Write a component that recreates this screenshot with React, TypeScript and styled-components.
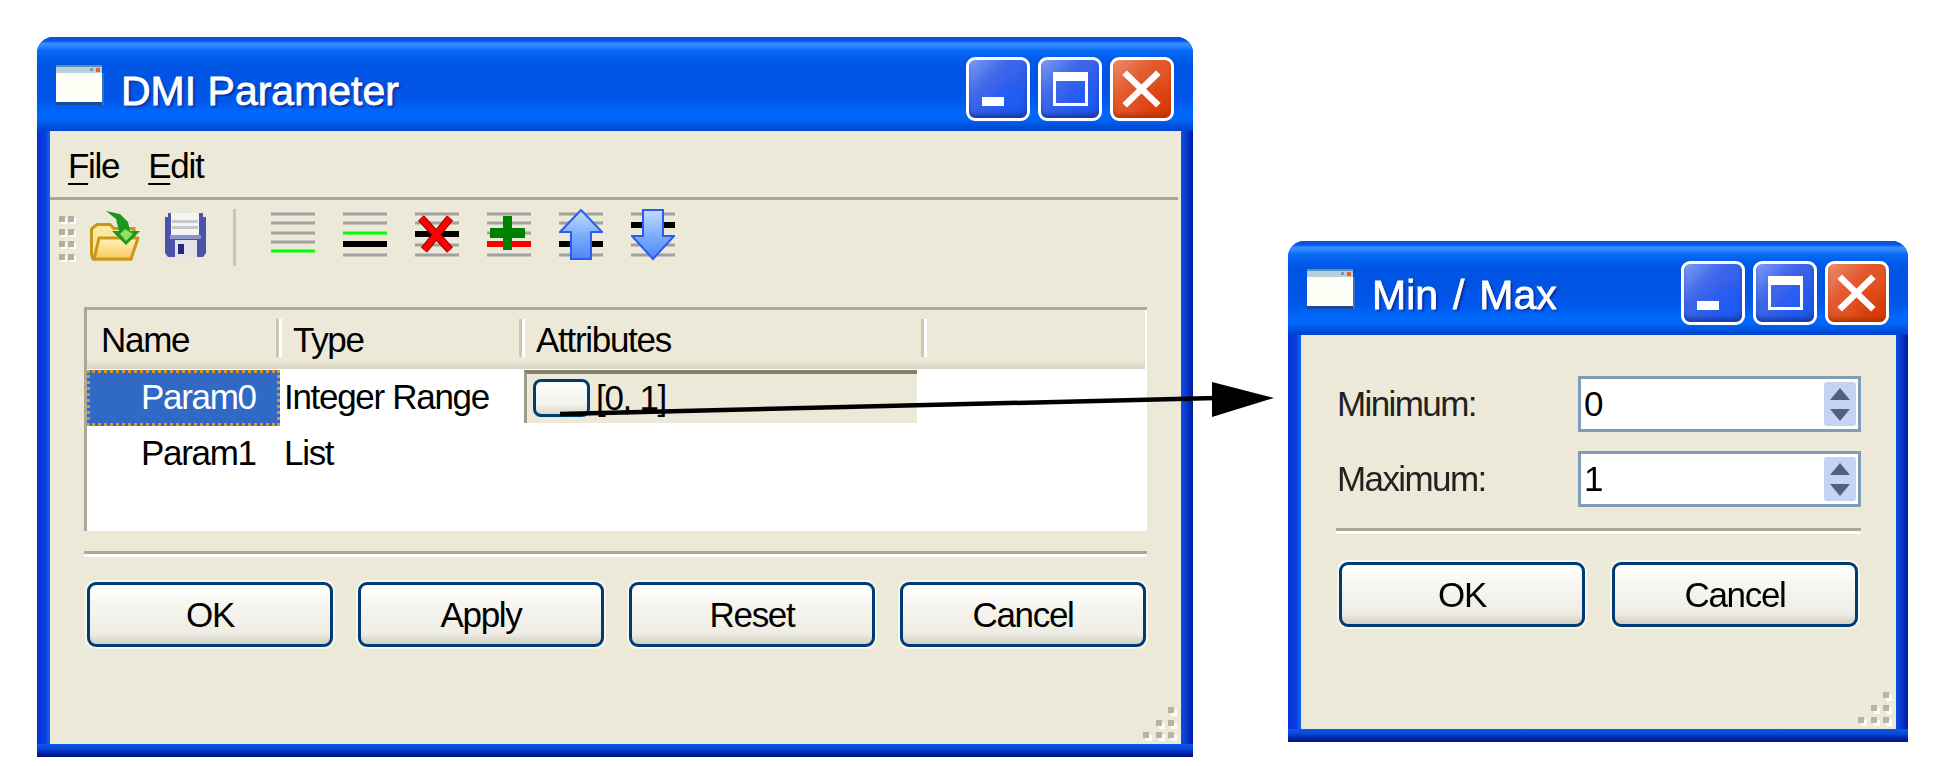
import React from 'react';
import styled, { createGlobalStyle } from 'styled-components';

const GlobalStyle = createGlobalStyle`
  html, body {
    margin: 0;
    padding: 0;
    background: #ffffff;
  }
  body {
    font-family: "Liberation Sans", Arial, sans-serif;
    font-size: 35px;
    letter-spacing: -1.3px;
    color: #000;
    overflow: hidden;
  }
`;

const Stage = styled.div`
  position: relative;
  width: 1950px;
  height: 766px;
  box-sizing: border-box;
  padding: 37px 0 0 37px;
  display: flex;
  align-items: flex-start;
  gap: 95px;
  filter: blur(0.6px);
`;

const Arrow = styled.svg`
  position: absolute;
  left: 0;
  top: 0;
  width: 1950px;
  height: 766px;
  pointer-events: none;
`;

const Window = styled.div<{ $w: number; $h: number; $top?: number }>`
  position: relative;
  flex: none;
  width: ${(p) => p.$w}px;
  height: ${(p) => p.$h}px;
  margin-top: ${(p) => p.$top ?? 0}px;
  display: flex;
  flex-direction: column;
  padding: 0 12px 13px 13px;
  box-sizing: border-box;
  border-radius: 16px 16px 0 0;
  overflow: hidden;
  background: linear-gradient(
    90deg,
    #0831d9 0,
    #0a3de0 8px,
    #0f68f0 13px,
    #0a50e4 calc(100% - 12px),
    #0837c8 calc(100% - 6px),
    #001a9c 100%
  );

  &::after {
    content: '';
    position: absolute;
    left: 0;
    right: 0;
    bottom: 0;
    height: 13px;
    background: linear-gradient(180deg, #0a58ea 0, #0a47da 35%, #00209c 75%, #00138c 100%);
  }
`;

const TitleBar = styled.div`
  flex: none;
  height: 94px;
  margin: 0 -12px 0 -13px;
  padding: 10px 19px 0;
  box-sizing: border-box;
  display: flex;
  align-items: center;
  background: linear-gradient(
    180deg,
    #0a50d8 0,
    #0a58e4 4%,
    #3a8cff 7%,
    #2b85ff 10%,
    #0a6cf8 14%,
    #0260ee 20%,
    #0054e3 30%,
    #0054e3 52%,
    #0058ec 68%,
    #0068fb 80%,
    #0066fa 88%,
    #0052e0 94%,
    #0042d0 100%
  );
`;

const TitleIcon = styled.svg`
  flex: none;
  width: 48px;
  height: 40px;
  margin: -8px 17px 0 0;
`;

const TitleText = styled.span<{ $word?: number }>`
  color: #fff;
  font-weight: 400;
  font-size: 41px;
  letter-spacing: 0;
  word-spacing: ${(p) => p.$word ?? 0}px;
  -webkit-text-stroke: 0.8px #fff;
  margin-top: 5px;
  text-shadow: 2px 2px 2px #0a2a98;
  white-space: nowrap;
`;

const TitleButtons = styled.div`
  margin-left: auto;
  display: flex;
  gap: 8px;
`;

const CaptionButton = styled.div<{ $close?: boolean }>`
  width: 64px;
  height: 64px;
  box-sizing: border-box;
  border: 3px solid #fff;
  border-radius: 9px;
  display: flex;
  align-items: center;
  justify-content: center;
  background: ${(p) =>
    p.$close
      ? 'radial-gradient(circle at 85% 85%, #d83c08 0, transparent 45%), linear-gradient(135deg, #ec8c6e 0, #e25a2e 38%, #e04f1c 70%, #c43a0a 100%)'
      : 'radial-gradient(circle at 78% 72%, #1f5cf8 0, transparent 42%), linear-gradient(135deg, #7c9cf4 0, #3f68ea 35%, #2a5ae8 70%, #1840b4 100%)'};
  box-shadow: inset 0 -5px 5px -2px ${(p) => (p.$close ? '#b03006' : '#163a9c')};
`;

const CaptionGlyph = styled.svg`
  width: 58px;
  height: 58px;
  flex: none;
`;

const Client = styled.div`
  position: relative;
  flex: 1;
  background: #ece9d8;
  display: flex;
  flex-direction: column;
`;

const MenuBar = styled.div`
  height: 62px;
  margin-right: 3px;
  padding: 4px 0 0 18px;
  display: flex;
  align-items: center;
  gap: 29px;
  border-bottom: 3px solid #aca899;
`;

const MenuItem = styled.span`
  u {
    text-underline-offset: 5px;
    text-decoration-thickness: 2px;
  }
`;

const Toolbar = styled.div`
  height: 70px;
  padding-left: 9px;
  display: flex;
  align-items: center;
`;

const GripDots = styled.div`
  display: grid;
  grid-template-columns: 6px 6px;
  column-gap: 3px;
  row-gap: 6.5px;
  margin: 6px 16px 0 0;
`;

const GripDot = styled.i`
  display: block;
  width: 6px;
  height: 6px;
  background: #b4b0a0;
  box-shadow: 2px 2px 0 #fff;
`;

const ToolIcon = styled.svg<{ $gap?: number }>`
  flex: none;
  margin-right: ${(p) => p.$gap ?? 0}px;
`;

const ToolSep = styled.div`
  flex: none;
  width: 3px;
  height: 57px;
  margin: 4px 35px 0 0;
  background: #c9c6b4;
`;

const TableBox = styled.div`
  margin: 37px 0 0 34px;
  width: 1063px;
  height: 224px;
  box-sizing: border-box;
  border-top: 3px solid #aca899;
  border-left: 3px solid #aca899;
  background: #fff;
`;

const TableHead = styled.div`
  height: 59px;
  display: grid;
  grid-template-columns: 192px 243px 402px;
  background: linear-gradient(180deg, #ece9d8 0, #ece9d8 84%, #d8d4c2 100%);
  margin-right: 2px;
`;

const HeadCell = styled.div`
  height: 38px;
  margin-top: 9px;
  padding: 4px 0 0 14px;
  box-sizing: border-box;
  display: flex;
  align-items: center;
  border-right: 3px solid #c9c6b4;
  box-shadow: 3px 0 0 #fff;
`;

const TableRow = styled.div<{ $first?: boolean }>`
  height: 56px;
  margin-top: ${(p) => (p.$first ? 1 : 0)}px;
  display: grid;
  grid-template-columns: 193px 244px 393px;
`;

const NameCell = styled.div<{ $selected?: boolean }>`
  box-sizing: border-box;
  padding: 0 0 2px 54px;
  display: flex;
  align-items: center;
  ${(p) =>
    p.$selected &&
    `
    padding-left: 51px;
    background: #316ac5;
    color: #fff;
    border: 3px dotted #d8962e;
  `}
`;

const TypeCell = styled.div`
  padding: 0 0 2px 4px;
  display: flex;
  align-items: center;
`;

const EditorCell = styled.div`
  height: 53px;
  box-sizing: border-box;
  border-top: 4px solid #85816f;
  border-left: 3px solid #a09c8c;
  background: #ece9d8;
  padding: 5px 0 0 6px;
  display: flex;
  align-items: flex-start;
  gap: 6px;
  line-height: 38px;
`;

const EllipsisButton = styled.div`
  width: 57px;
  height: 38px;
  box-sizing: border-box;
  border: 3px solid #003c74;
  border-radius: 8px;
  background: linear-gradient(180deg, #fff 0, #f2f1ea 70%, #dcd8c8 100%);
`;

const Rule = styled.div<{ $top: number; $left: number; $w: number }>`
  flex: none;
  margin: ${(p) => `${p.$top}px 0 0 ${p.$left}px`};
  width: ${(p) => p.$w}px;
  height: 3px;
  background: #aca899;
  border-bottom: 3px solid #fff;
`;

const ButtonRow = styled.div<{ $top: number; $left: number; $gap: number }>`
  display: flex;
  gap: ${(p) => p.$gap}px;
  margin: ${(p) => `${p.$top}px 0 0 ${p.$left}px`};
`;

const PushButton = styled.div`
  flex: none;
  width: 246px;
  height: 65px;
  box-sizing: border-box;
  border: 3px solid #003c74;
  border-radius: 9px;
  display: flex;
  align-items: center;
  justify-content: center;
  background: linear-gradient(180deg, #ffffff 0, #f5f4ee 40%, #eeede5 82%, #dcd8cc 94%, #d6d0c5 100%);
  box-shadow: 0 0 0 2px #f7f6ef;
`;

const ResizeGrip = styled.div`
  position: absolute;
  right: 4px;
  bottom: 3px;
  display: grid;
  grid-template-columns: repeat(3, 6px);
  gap: 6.5px;
  padding-right: 3px;
  padding-bottom: 3px;
`;

const ResizeDot = styled.i<{ $off?: boolean }>`
  display: block;
  width: 6px;
  height: 6px;
  background: ${(p) => (p.$off ? 'transparent' : '#b8b4a2')};
  box-shadow: ${(p) => (p.$off ? 'none' : '3px 3px 0 #fff')};
`;

const FormBody = styled.div`
  padding: 41px 0 0 36px;
  display: flex;
  flex-direction: column;
  gap: 19px;
`;

const FormRow = styled.div`
  display: flex;
  align-items: center;
  height: 56px;
`;

const FormLabel = styled.span`
  flex: none;
  width: 241px;
  color: #222;
  letter-spacing: -1.6px;
`;

const SpinBox = styled.div`
  flex: none;
  width: 283px;
  height: 56px;
  box-sizing: border-box;
  border: 3px solid #7f9db9;
  background: #fff;
  padding: 3px 2px 3px 3px;
  display: flex;
  align-items: center;
`;

const SpinValue = styled.span`
  flex: 1;
`;

const SpinButtons = styled.svg`
  flex: none;
  width: 32px;
  height: 44px;
`;

function LineIcon({
  lines,
  children,
}: {
  lines: [number, number, string][];
  children?: React.ReactNode;
}) {
  return (
    <ToolIcon $gap={28} width={44} height={52} viewBox="0 0 44 52">
      {lines.map(([y, h, c], i) => (
        <rect key={i} x={0} y={y} width={44} height={h} fill={c} />
      ))}
      {children}
    </ToolIcon>
  );
}

const GREY = '#a0a0a0';

const WinIcon = () => (
  <TitleIcon viewBox="0 0 48 40">
    <rect x="0" y="2" width="46" height="36" fill="#fffff8" />
    <rect x="0" y="0" width="46" height="8" fill="#b8d0dc" />
    <rect x="0" y="0" width="46" height="2" fill="#5a90b0" />
    <rect x="40" y="3" width="4" height="4" fill="#f06020" />
    <rect x="34" y="3" width="3" height="3" fill="#7898b0" />
    <rect x="0" y="37" width="46" height="3" fill="#1a4a9c" />
    <rect x="46" y="8" width="2" height="32" fill="#3a70c0" />
  </TitleIcon>
);

const Caption = () => (
  <TitleButtons>
    <CaptionButton>
      <CaptionGlyph viewBox="0 0 58 58">
        <rect x="13" y="37" width="22" height="9" fill="#fff" />
      </CaptionGlyph>
    </CaptionButton>
    <CaptionButton>
      <CaptionGlyph viewBox="0 0 58 58">
        <rect x="12" y="12" width="35" height="9" fill="#fff" />
        <rect x="13.5" y="13.5" width="32" height="31" fill="none" stroke="#fff" strokeWidth="3" />
      </CaptionGlyph>
    </CaptionButton>
    <CaptionButton $close>
      <CaptionGlyph viewBox="0 0 58 58">
        <path d="M14 15 L43 43 M43 15 L14 43" stroke="#fff" strokeWidth="6.5" strokeLinecap="square" fill="none" />
      </CaptionGlyph>
    </CaptionButton>
  </TitleButtons>
);

const Grip = () => (
  <ResizeGrip>
    <ResizeDot $off />
    <ResizeDot $off />
    <ResizeDot />
    <ResizeDot $off />
    <ResizeDot />
    <ResizeDot />
    <ResizeDot />
    <ResizeDot />
    <ResizeDot />
  </ResizeGrip>
);

const Spinner = () => (
  <SpinButtons viewBox="0 0 32 44">
    <rect width="32" height="44" rx="3" fill="#c6d3f5" />
    <path d="M16 6 L26 18 H6 Z" fill="#4d6185" />
    <path d="M16 39 L26 27 H6 Z" fill="#4d6185" />
  </SpinButtons>
);

export default function App() {
  return (
    <Stage>
      <GlobalStyle />
      <Window $w={1156} $h={720}>
        <TitleBar>
          <WinIcon />
          <TitleText>DMI Parameter</TitleText>
          <Caption />
        </TitleBar>
        <Client>
          <MenuBar>
            <MenuItem>
              <u>F</u>ile
            </MenuItem>
            <MenuItem>
              <u>E</u>dit
            </MenuItem>
          </MenuBar>
          <Toolbar>
            <GripDots>
              {Array.from({ length: 8 }).map((_, i) => (
                <GripDot key={i} />
              ))}
            </GripDots>
            <ToolIcon $gap={25} width={50} height={51} viewBox="0 0 50 51">
              <defs>
                <linearGradient id="folderFront" x1="0" y1="0" x2="0" y2="1">
                  <stop offset="0" stopColor="#fff3b8" />
                  <stop offset="1" stopColor="#f8c860" />
                </linearGradient>
              </defs>
              <path d="M1.5 19 L7 14.5 H20 L24 18.5 H44 V28 L41 49 H3 L1.5 44 Z" fill="#fde99c" stroke="#c8961c" strokeWidth="3" />
              <path d="M9 28 H48 L41 49 H4 Z" fill="url(#folderFront)" stroke="#c8961c" strokeWidth="3" strokeLinejoin="round" />
              <path d="M16 1 L30 4 L38 12 L40 21 L50 21 L36 35 L22 21 L29 21 L26 9 Z" fill="#1c961c" />
              <path d="M35 19 L43 24 L36 31 L30 24 Z" fill="#90e060" />
            </ToolIcon>
            <ToolIcon $gap={27} width={41} height={46} viewBox="0 0 41 46">
              <path d="M0 5 L3 5 V1 H38 V5 H41 V41 L38 45 H3 L0 41 Z" fill="#4a54a8" />
              <rect x="6" y="1" width="28" height="22" fill="#f4f4f4" />
              <rect x="7" y="8" width="26" height="3" fill="#c8c8c8" />
              <rect x="7" y="14" width="26" height="3" fill="#c8c8c8" />
              <rect x="5" y="23" width="31" height="4" fill="#8c94cc" />
              <rect x="10" y="28" width="22" height="17" fill="#e4e4e4" />
              <rect x="13" y="32" width="6" height="10" fill="#20288c" />
            </ToolIcon>
            <ToolSep />
            <LineIcon
              lines={[
                [3.5, 3, GREY],
                [12.5, 3, GREY],
                [22.5, 3, GREY],
                [31.5, 3, GREY],
                [40.5, 3, '#00ff00'],
              ]}
            />
            <LineIcon
              lines={[
                [3.5, 3, GREY],
                [12.5, 3, GREY],
                [22.5, 3, '#00ff00'],
                [32, 6, '#000'],
                [44.5, 3, GREY],
              ]}
            />
            <LineIcon
              lines={[
                [3.5, 3, GREY],
                [12.5, 3, GREY],
                [22, 6, '#000'],
                [34.5, 3, GREY],
                [44.5, 3, GREY],
              ]}
            >
              <path d="M6 9 L35 41 M35 9 L9 41" stroke="#8c0000" strokeWidth="8" fill="none" />
              <path d="M6 9 L35 41 M35 9 L9 41" stroke="#ff0000" strokeWidth="6" fill="none" />
            </LineIcon>
            <LineIcon
              lines={[
                [3.5, 3, GREY],
                [12.5, 3, GREY],
                [22.5, 3, GREY],
                [32, 6, '#ff0000'],
                [44.5, 3, GREY],
              ]}
            >
              <rect x="16" y="7" width="9" height="34" fill="#008000" />
              <rect x="3" y="19" width="35" height="10" fill="#008000" />
            </LineIcon>
            <LineIcon
              lines={[
                [3.5, 3, GREY],
                [12.5, 3, GREY],
                [32, 6, '#000'],
                [44.5, 3, GREY],
              ]}
            >
              <defs>
                <linearGradient id="arrowFill" x1="0" y1="0" x2="0" y2="1">
                  <stop offset="0" stopColor="#c4dcff" />
                  <stop offset="0.5" stopColor="#80aefc" />
                  <stop offset="1" stopColor="#4f86f8" />
                </linearGradient>
              </defs>
              <path d="M22 1 L43 23 H32 V50 H12 V23 H1 Z" fill="url(#arrowFill)" stroke="#2a5cf0" strokeWidth="2" />
            </LineIcon>
            <LineIcon
              lines={[
                [3.5, 3, GREY],
                [13, 6, '#000'],
                [34.5, 3, GREY],
                [44.5, 3, GREY],
              ]}
            >
              <path d="M12 1 H32 V27 H43 L22 50 L1 27 H12 Z" fill="url(#arrowFill)" stroke="#2a5cf0" strokeWidth="2" />
            </LineIcon>
          </Toolbar>
          <TableBox>
            <TableHead>
              <HeadCell>Name</HeadCell>
              <HeadCell>Type</HeadCell>
              <HeadCell>Attributes</HeadCell>
            </TableHead>
            <TableRow $first>
              <NameCell $selected>Param0</NameCell>
              <TypeCell>Integer Range</TypeCell>
              <EditorCell>
                <EllipsisButton />
                <span>[0, 1]</span>
              </EditorCell>
            </TableRow>
            <TableRow>
              <NameCell>Param1</NameCell>
              <TypeCell>List</TypeCell>
            </TableRow>
          </TableBox>
          <Rule $top={20} $left={34} $w={1063} />
          <ButtonRow $top={25} $left={37} $gap={25}>
            <PushButton>OK</PushButton>
            <PushButton>Apply</PushButton>
            <PushButton>Reset</PushButton>
            <PushButton>Cancel</PushButton>
          </ButtonRow>
          <Grip />
        </Client>
      </Window>

      <Window $w={620} $h={501} $top={204}>
        <TitleBar>
          <WinIcon />
          <TitleText $word={3.5}>Min / Max</TitleText>
          <Caption />
        </TitleBar>
        <Client>
          <FormBody>
            <FormRow>
              <FormLabel>Minimum:</FormLabel>
              <SpinBox>
                <SpinValue>0</SpinValue>
                <Spinner />
              </SpinBox>
            </FormRow>
            <FormRow>
              <FormLabel>Maximum:</FormLabel>
              <SpinBox>
                <SpinValue>1</SpinValue>
                <Spinner />
              </SpinBox>
            </FormRow>
          </FormBody>
          <Rule $top={21} $left={35} $w={525} />
          <ButtonRow $top={28} $left={38} $gap={27}>
            <PushButton>OK</PushButton>
            <PushButton>Cancel</PushButton>
          </ButtonRow>
          <Grip />
        </Client>
      </Window>

      <Arrow viewBox="0 0 1950 766">
        <path d="M560 414 L1216 398" stroke="#000" strokeWidth="4.5" fill="none" />
        <path d="M1212 382 L1274 398 L1212 417 Z" fill="#000" />
      </Arrow>
    </Stage>
  );
}
